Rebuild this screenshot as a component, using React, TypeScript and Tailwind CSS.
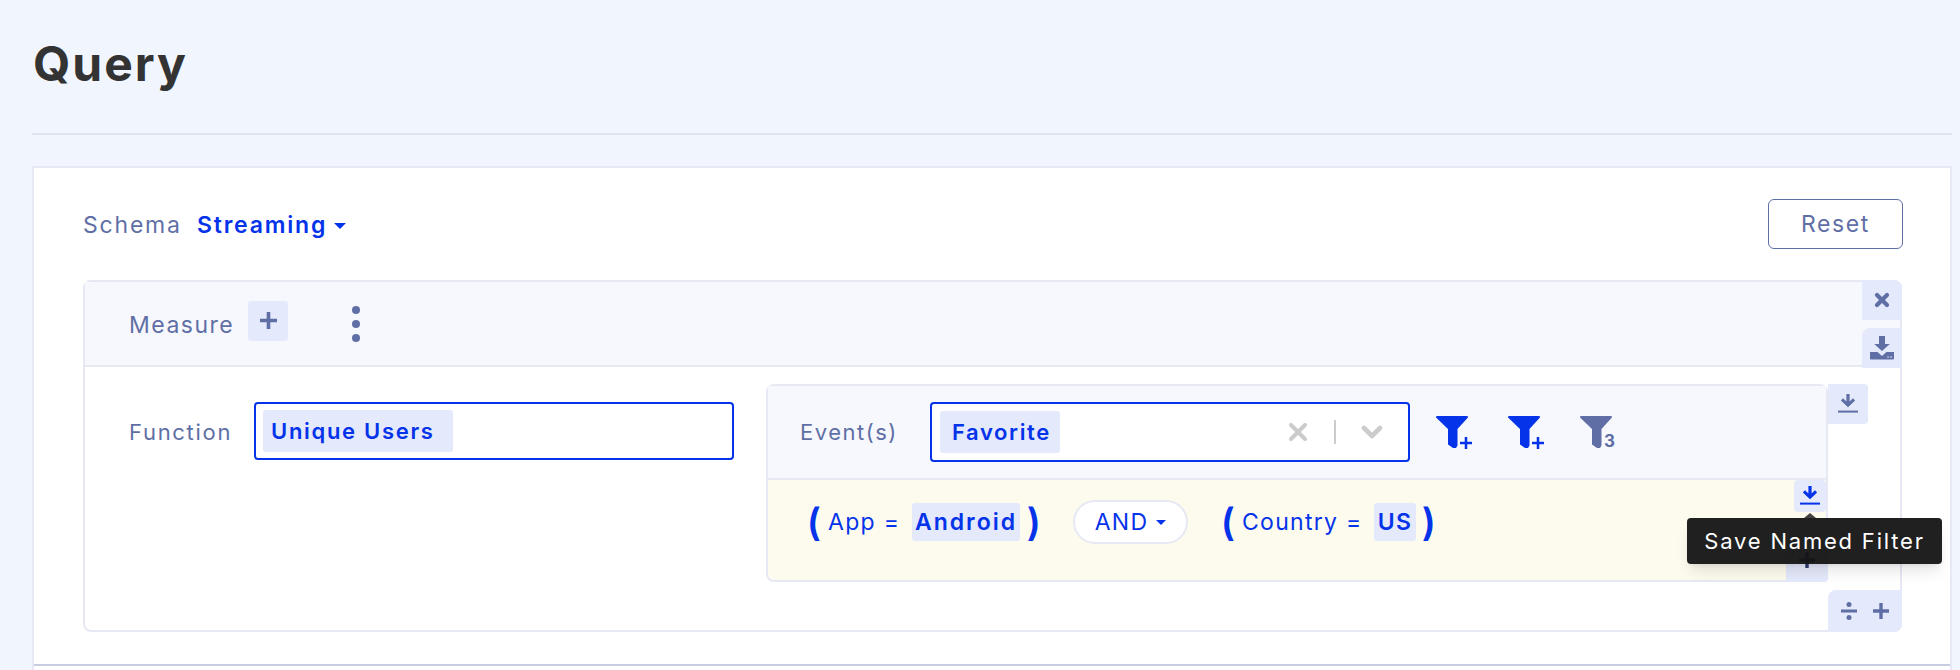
import { X, ChevronDown } from "lucide-react";

const font = { fontFamily: "Inter, 'Liberation Sans', sans-serif" };

function ArrowDownLine({ className }: { className: string }) {
  return (
    <svg viewBox="0 0 20 20" className={className} fill="currentColor">
      <path d="M8.400 0h3.200v7.500l3.400-3.200 2.100 2.100L10 13.200 2.900 6.400 5 4.300l3.400 3.200z" />
      <rect x="0" y="16.600" width="20" height="2" />
    </svg>
  );
}

function SaveTray({ className }: { className: string }) {
  return (
    <svg viewBox="0 0 24 24" className={className} fill="currentColor">
      <path d="M9 0h6v8h4.800L12 15 4.200 8H9z" />
      <path d="M0 16h7.500l4.500 4 4.500-4H24v6.500a1 1 0 0 1-1 1H1a1 1 0 0 1-1-1z" />
      <circle cx="18" cy="21" r="0.800" fill="#e4e9fb" />
      <circle cx="21" cy="21" r="0.800" fill="#e4e9fb" />
    </svg>
  );
}

function Plus({ className }: { className: string }) {
  return (
    <svg viewBox="0 0 16 16" className={className} fill="currentColor">
      <path d="M6.300 0h3.400v6.300H16v3.400H9.700V16H6.300V9.700H0V6.300h6.300z" />
    </svg>
  );
}

function Funnel({ badge, color }: { badge: string; color: string }) {
  return (
    <div className={`relative h-8 w-9 ${color}`}>
      <svg viewBox="0 0 32 32" className="absolute left-0 top-0 h-8 w-8" fill="currentColor">
        <path d="M1 0h30a1 1 0 0 1 .7 1.700L21.500 13v16.500L20 32h-3l-5-3.500V13L.3 1.700A1 1 0 0 1 1 0z" />
      </svg>
      {badge === "+" ? (
        <Plus className="absolute left-[24px] top-[21px] h-3 w-3" />
      ) : (
        <span className="absolute left-[24px] top-[15px] text-[17px] font-bold leading-[20px]">{badge}</span>
      )}
    </div>
  );
}

function Paren({ children }: { children: string }) {
  return (
    <span className="flex w-[11px] justify-center text-[38px] font-semibold leading-none text-[#0433ea]">
      {children}
    </span>
  );
}

function Chip({ children, className }: { children: string; className: string }) {
  return (
    <span className={`flex items-center rounded-[3px] bg-[#e4e9fb] font-semibold text-[#0433ea] ${className}`}>
      {children}
    </span>
  );
}

export default function App() {
  return (
    <div style={font} className="h-[670px] w-[1960px] overflow-hidden bg-[#f1f5fd] pl-8 pr-2">
      <h1 className="pb-[37px] pl-px pt-[32px] text-[48px] font-bold leading-[64px] tracking-[2px] text-[#333333]">Query</h1>
      <div className="h-0.5 bg-[#e0e4f0]" />
      <div className="mt-[31px] h-[520px] border-2 border-[#e6e9f4] bg-white pl-[49px] pr-[47px] pt-[31px]">
        <div className="flex h-[50px] items-center justify-between">
          <div className="mt-0.5 flex items-center text-[23px] tracking-[1.8px]">
            <span className="w-[114px] text-[#5f6fa6]">Schema</span>
            <span className="font-semibold text-[#0433ea]">Streaming</span>
            <span className="ml-[7px] mt-[2px] h-0 w-0 border-x-[6px] border-t-[6px] border-x-transparent border-t-[#0433ea]" />
          </div>
          <button type="button" className="h-[50px] w-[135px] rounded-md border border-[#5f6fa6] text-[23px] tracking-[1.6px] text-[#5f6fa6]">Reset</button>
        </div>

        <div className="relative mt-[31px] h-[352px] w-[1819px] rounded-lg border-2 border-[#e6e9f4]">
          <div className="flex h-[85px] items-center border-b-2 border-[#e6e9f4] bg-[#f7f8fd] pl-[44px]">
            <span className="mt-1 text-[23px] tracking-[1.500px] text-[#5f6fa6]">Measure</span>
            <span className="mb-[6px] ml-[14px] flex h-10 w-10 items-center justify-center rounded-[3px] bg-[#e4e9fb] text-[#5f6fa6]">
              <Plus className="h-[17px] w-[17px]" />
            </span>
            <span className="ml-[64px] flex flex-col gap-[6px]">
              <span className="h-2 w-2 rounded-full bg-[#5f6fa6]" />
              <span className="h-2 w-2 rounded-full bg-[#5f6fa6]" />
              <span className="h-2 w-2 rounded-full bg-[#5f6fa6]" />
            </span>
          </div>

          <div className="absolute right-[-2px] top-[-2px] flex h-10 w-10 items-center justify-center rounded-tr-lg bg-[#e4e9fb] text-[#5f6fa6]">
            <X className="h-[20px] w-[20px]" strokeWidth={5} />
          </div>
          <div className="absolute right-[-2px] top-[46px] flex h-10 w-10 items-center justify-center rounded-tl-lg bg-[#e4e9fb] text-[#5f6fa6]">
            <SaveTray className="h-6 w-6" />
          </div>

          <div className="flex items-start pl-[44px] pt-[35px]">
            <span className="mt-[14px] w-[125px] text-[22px] tracking-[1.700px] text-[#5f6fa6]">Function</span>
            <div className="flex h-[58px] w-[480px] items-center rounded border-2 border-[#0433ea] bg-white pl-[7px]">
              <Chip className="h-[42px] w-[190px] pl-2 text-[22px] tracking-[1.700px]">Unique Users</Chip>
            </div>

            <div className="relative ml-[32px] mt-[-18px] h-[198px] w-[1062px] rounded-lg border-2 border-[#e6e9f4]">
              <div className="flex h-[94px] items-center border-b-2 border-[#e6e9f4] bg-[#f7f8fd] pl-[32px]">
                <span className="w-[130px] text-[22px] tracking-[1.500px] text-[#5f6fa6]">Event(s)</span>
                <div className="flex h-[60px] w-[480px] items-center rounded border-2 border-[#0433ea] bg-white pl-2">
                  <Chip className="h-[42px] w-[120px] pl-[12px] text-[22px] tracking-[1.600px]">Favorite</Chip>
                  <X className="ml-[224px] h-7 w-7 text-[#cccccc]" strokeWidth={3.500} />
                  <span className="ml-[22px] h-6 w-0.5 bg-[#cccccc]" />
                  <ChevronDown className="ml-[20px] h-8 w-8 text-[#cccccc]" strokeWidth={3.500} />
                </div>
                <div className="ml-[26px] flex gap-9">
                  <Funnel badge="+" color="text-[#0433ea]" />
                  <Funnel badge="+" color="text-[#0433ea]" />
                  <Funnel badge="3" color="text-[#5f6fa6]" />
                </div>
              </div>
              <div className="flex h-[100px] items-start rounded-b-lg bg-[#fdfbee] pl-[41px] pt-[20px] text-[23px] tracking-[1.300px] text-[#0433ea]">
                <span className="flex h-[44px] items-center">
                  <Paren>(</Paren>
                  <span className="ml-[8px] w-[84px] pt-px">App =</span>
                  <Chip className="h-[38px] w-[108px] justify-center pt-px tracking-[2px]">Android</Chip>
                  <span className="ml-[9px]"><Paren>)</Paren></span>
                </span>
                <span className="ml-[33px] flex h-[44px] w-[115px] items-center justify-center rounded-full border-2 border-[#e6e9f4] bg-white pt-px">
                  AND
                  <span className="ml-2 h-0 w-0 border-x-[5px] border-t-[5px] border-x-transparent border-t-[#0433ea]" />
                </span>
                <span className="ml-[35px] flex h-[44px] items-center">
                  <Paren>(</Paren>
                  <span className="ml-[8px] w-[132px] pt-px">Country =</span>
                  <Chip className="h-[38px] w-[42px] justify-center pt-px">US</Chip>
                  <span className="ml-[8px]"><Paren>)</Paren></span>
                </span>
              </div>

              <div className="absolute right-[-42px] top-[-2px] flex h-10 w-10 items-center justify-center rounded-r bg-[#e4e9fb] text-[#5f6fa6]">
                <ArrowDownLine className="h-5 w-5" />
              </div>
              <div className="absolute right-0 top-[94px] flex h-[32px] w-[32px] items-center justify-center rounded bg-[#e4e9fb] text-[#0433ea]">
                <ArrowDownLine className="h-5 w-5" />
              </div>
              <div className="absolute bottom-[-2px] right-[-2px] flex h-[42px] w-[42px] items-start justify-center rounded-br bg-[#e4e9fb] pt-[12px] text-[#2f3a70]">
                <Plus className="h-4 w-4" />
              </div>
            </div>
          </div>

          <div className="absolute bottom-[-2px] right-[-2px] flex h-[42px] w-[74px] items-center justify-center gap-[16px] rounded-br-lg rounded-tl-lg bg-[#e4e9fb] text-[#5f6fa6]">
            <svg viewBox="0 0 16 18" className="h-[18px] w-4" fill="currentColor">
              <circle cx="8" cy="2.500" r="2.500" />
              <rect x="0" y="7.500" width="16" height="3" />
              <circle cx="8" cy="15.500" r="2.500" />
            </svg>
            <Plus className="h-4 w-4" />
          </div>
        </div>

        <div className="-ml-[49px] -mr-[47px] mt-[32px] h-0.5 bg-[#c9cde2]" />
      </div>

      <div className="absolute left-[1687px] top-[518px] flex h-[46px] w-[255px] items-center justify-center rounded bg-[#141414]/95 text-[22px] tracking-[1.800px] text-white shadow-lg">
        <span className="absolute left-[117px] top-[-5px] h-0 w-0 border-x-[6px] border-b-[5px] border-x-transparent border-b-[#444444]" />
        Save Named Filter
      </div>
    </div>
  );
}
